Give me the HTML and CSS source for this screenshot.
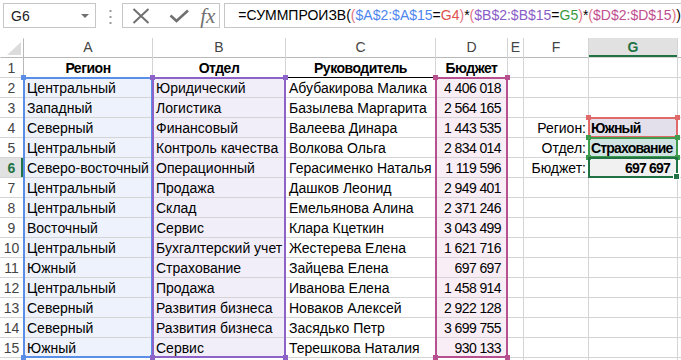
FILE: index.html
```html
<!DOCTYPE html>
<html lang="ru">
<head>
    <meta charset="UTF-8">
    <meta name="viewport" content="width=device-width, initial-scale=1.0">
    <title>СУММПРОИЗВ</title>
    <link rel="stylesheet" href="styles.css">
</head>
<body>
    <div class="topbar">
        <div class="namebox"><span>G6</span><i class="arrow"></i></div>
        <div class="grip">
            <svg width="3" height="15" viewBox="0 0 3 15"><rect x="0.5" y="0" width="2" height="2" fill="#9a9a9a"/><rect x="0.5" y="6" width="2" height="2" fill="#9a9a9a"/><rect x="0.5" y="12" width="2" height="2" fill="#9a9a9a"/></svg>
        </div>
        <div class="buttons">
            <svg class="ico-x" width="18" height="16" viewBox="0 0 18 16"><path d="M1.5 1 L16.5 15 M16.5 1 L1.5 15" stroke="#707070" stroke-width="2" fill="none"/></svg>
            <svg class="ico-ok" width="20" height="14" viewBox="0 0 20 14"><path d="M1.5 6.5 L7.5 12 L19 1.5" stroke="#707070" stroke-width="2.6" fill="none"/></svg>
            <span class="fx">fx</span>
        </div>
        <div class="formula">=СУММПРОИЗВ(<span class="p">(</span><span class="ca">$A$2:$A$15</span>=<span class="cg4">G4</span><span class="p">)</span>*<span class="p">(</span><span class="cb">$B$2:$B$15</span>=<span class="cg5">G5</span><span class="p">)</span>*<span class="p">(</span><span class="cd">$D$2:$D$15</span><span class="p">)</span>)</div>
    </div>

    <div class="sheet-wrap">
        <div class="sheet">
            <div class="corner"><svg width="14" height="13" viewBox="0 0 14 13"><polygon points="14,0 14,13 0,13" fill="#dcdcdc"/></svg></div>
            <div class="h">A</div><div class="h">B</div><div class="h">C</div><div class="h">D</div><div class="h">E</div><div class="h">F</div><div class="h sel">G</div><div class="h"></div>

            <div class="rh">1</div><div class="c th">Регион</div><div class="c th">Отдел</div><div class="c th">Руководитель</div><div class="c th">Бюджет</div><div class="c"></div><div class="c"></div><div class="c"></div><div class="c"></div>

            <div class="rh">2</div><div class="c fa">Центральный</div><div class="c fb">Юридический</div><div class="c">Абубакирова Малика</div><div class="c fd num">4 406 018</div><div class="c"></div><div class="c"></div><div class="c"></div><div class="c"></div>

            <div class="rh">3</div><div class="c fa">Западный</div><div class="c fb">Логистика</div><div class="c">Базылева Маргарита</div><div class="c fd num">2 564 165</div><div class="c"></div><div class="c"></div><div class="c"></div><div class="c"></div>

            <div class="rh">4</div><div class="c fa">Северный</div><div class="c fb">Финансовый</div><div class="c">Валеева Динара</div><div class="c fd num">1 443 535</div><div class="c"></div><div class="c lbl">Регион:</div><div class="c val v-reg">Южный</div><div class="c"></div>

            <div class="rh">5</div><div class="c fa">Центральный</div><div class="c fb">Контроль качества</div><div class="c">Волкова Ольга</div><div class="c fd num">2 834 014</div><div class="c"></div><div class="c lbl">Отдел:</div><div class="c val v-dep">Страхование</div><div class="c"></div>

            <div class="rh sel">6</div><div class="c fa">Северо-восточный</div><div class="c fb">Операционный</div><div class="c">Герасименко Наталья</div><div class="c fd num">1 119 596</div><div class="c"></div><div class="c lbl">Бюджет:</div><div class="c val v-sum num">697 697</div><div class="c"></div>

            <div class="rh">7</div><div class="c fa">Центральный</div><div class="c fb">Продажа</div><div class="c">Дашков Леонид</div><div class="c fd num">2 949 401</div><div class="c"></div><div class="c"></div><div class="c"></div><div class="c"></div>

            <div class="rh">8</div><div class="c fa">Центральный</div><div class="c fb">Склад</div><div class="c">Емельянова Алина</div><div class="c fd num">2 371 246</div><div class="c"></div><div class="c"></div><div class="c"></div><div class="c"></div>

            <div class="rh">9</div><div class="c fa">Восточный</div><div class="c fb">Сервис</div><div class="c">Клара Кцеткин</div><div class="c fd num">3 043 499</div><div class="c"></div><div class="c"></div><div class="c"></div><div class="c"></div>

            <div class="rh">10</div><div class="c fa">Центральный</div><div class="c fb">Бухгалтерский учет</div><div class="c">Жестерева Елена</div><div class="c fd num">1 621 716</div><div class="c"></div><div class="c"></div><div class="c"></div><div class="c"></div>

            <div class="rh">11</div><div class="c fa">Южный</div><div class="c fb">Страхование</div><div class="c">Зайцева Елена</div><div class="c fd num">697 697</div><div class="c"></div><div class="c"></div><div class="c"></div><div class="c"></div>

            <div class="rh">12</div><div class="c fa">Центральный</div><div class="c fb">Продажа</div><div class="c">Иванова Елена</div><div class="c fd num">1 458 914</div><div class="c"></div><div class="c"></div><div class="c"></div><div class="c"></div>

            <div class="rh">13</div><div class="c fa">Северный</div><div class="c fb">Развития бизнеса</div><div class="c">Новаков Алексей</div><div class="c fd num">2 922 128</div><div class="c"></div><div class="c"></div><div class="c"></div><div class="c"></div>

            <div class="rh">14</div><div class="c fa">Северный</div><div class="c fb">Развития бизнеса</div><div class="c">Засядько Петр</div><div class="c fd num">3 699 755</div><div class="c"></div><div class="c"></div><div class="c"></div><div class="c"></div>

            <div class="rh">15</div><div class="c fa">Южный</div><div class="c fb">Сервис</div><div class="c">Терешкова Наталия</div><div class="c fd num">930 133</div><div class="c"></div><div class="c"></div><div class="c"></div><div class="c"></div>

            <div class="rh"></div><div class="c"></div><div class="c"></div><div class="c"></div><div class="c"></div><div class="c"></div><div class="c"></div><div class="c"></div><div class="c"></div>
        </div>

        <!-- цветные рамки диапазонов из формулы, поверх листа -->
        <div class="marks">
            <div class="range r-a"><i class="hd tl"></i><i class="hd tr"></i><i class="hd bl"></i><i class="hd br"></i></div>
            <div class="range r-b"><i class="hd tl"></i><i class="hd tr"></i><i class="hd bl"></i><i class="hd br"></i></div>
            <div class="range r-d"><i class="hd tl"></i><i class="hd tr"></i><i class="hd bl"></i><i class="hd br"></i></div>
            <div class="range r-g4"><i class="hd tl"></i><i class="hd tr"></i></div>
            <div class="range r-g5"><i class="hd tl"></i><i class="hd tr"></i><i class="hd bl"></i><i class="hd br"></i></div>
            <div class="range active"><i class="fill"></i></div>
        </div>
    </div>
</body>
</html>
```

FILE: styles.css
```css
body {
    margin: 0;
    width: 681px;
    height: 360px;
    overflow: hidden;
    background-color: #fff;
    font-family: "Liberation Sans", Arial, sans-serif;
    font-size: 14px;
    color: #000;
}

/* строка формул */
.topbar {
    display: flex;
    align-items: flex-start;
    height: 38px;
    padding-top: 3px;
    box-sizing: border-box;
}
.namebox {
    margin-left: 3px;
    width: 103px;
    height: 25px;
    border: 1px solid #c6c6c6;
    box-sizing: border-box;
    display: flex;
    align-items: center;
    justify-content: space-between;
    padding: 0 6px 0 7px;
    color: #222;
}
.arrow {
    width: 0;
    height: 0;
    border-left: 4px solid transparent;
    border-right: 4px solid transparent;
    border-top: 4px solid #707070;
}
.grip {
    width: 29px;
    display: flex;
    justify-content: center;
    padding-top: 7px;
    padding-left: 2px;
    box-sizing: border-box;
}
.buttons {
    width: 109px;
    height: 25px;
    border: 1px solid #c6c6c6;
    box-sizing: border-box;
    display: flex;
    align-items: center;
    padding-left: 9px;
}
.ico-ok {
    margin-left: 19px;
}
.fx {
    margin-left: 11px;
    font-family: "Liberation Serif", serif;
    font-style: italic;
    font-size: 21px;
    color: #707070;
    line-height: 20px;
}
.formula {
    flex: 1;
    height: 25px;
    margin-left: 4px;
    border: 1px solid #c6c6c6;
    border-right: none;
    box-sizing: border-box;
    padding-left: 13px;
    line-height: 23px;
    white-space: nowrap;
}
.formula .p { color: #e07384; }
.formula .ca { color: #4e86ee; }
.formula .cg4 { color: #e0504f; }
.formula .cb { color: #8a5cc6; }
.formula .cg5 { color: #3a9a3e; }
.formula .cd { color: #bf4f90; }

/* лист */
.sheet-wrap {
    position: relative;
}
.sheet,
.marks {
    display: grid;
    grid-template-columns: 23px 128px 132px 149px 71px 15px 64px 88px 1fr;
    grid-auto-rows: 19px;
    gap: 1px;
}
.sheet {
    background-color: #d4d4d4;
}
.marks {
    position: absolute;
    top: 0;
    left: 0;
    right: 0;
    bottom: 0;
    pointer-events: none;
}
.corner {
    background-color: #fff;
    display: flex;
    justify-content: flex-end;
    align-items: flex-end;
    padding: 0 2px 2px 0;
    box-shadow: 1px 1px 0 #b8b8b8;
}
.h {
    background-color: #fff;
    color: #444;
    text-align: center;
    line-height: 19px;
    box-shadow: 0 1px 0 #b8b8b8;
}
.rh {
    background-color: #fff;
    color: #444;
    text-align: center;
    line-height: 20px;
    box-shadow: 1px 0 0 #b8b8b8;
}
.h.sel {
    background-color: #e1e1e1;
    color: #217346;
    font-weight: bold;
    box-shadow: inset 0 -2px 0 #217346;
}
.rh.sel {
    background-color: #e1e1e1;
    color: #217346;
    font-weight: bold;
    box-shadow: inset -2px 0 0 #217346;
}
.c {
    background-color: #fff;
    line-height: 20px;
    padding: 0 3px;
    white-space: nowrap;
    overflow: hidden;
}
.th {
    font-weight: bold;
    text-align: center;
    letter-spacing: -0.5px;
    box-shadow: 0 1px 0 #000;
}
.num {
    text-align: right;
    padding-right: 6px;
    letter-spacing: -0.6px;
}
.lbl {
    text-align: right;
    padding-right: 2px;
}
.fa { background-color: #eef2fc; }
.fb { background-color: #f2eef9; }
.fd { background-color: #f9eef5; }
.val {
    font-weight: bold;
    letter-spacing: -0.8px;
    padding-left: 2px;
}
.v-reg { background-color: #e3e0ec; }
.v-dep { background-color: #cfe4e3; }
.v-sum {
    background-color: #f1f1f1;
    padding-right: 7px;
}

/* рамки диапазонов */
.range {
    position: relative;
    margin: -1px;
    border: 2px solid;
}
.r-a { grid-column: 2; grid-row: 3 / 17; border-color: #5b8ee6; color: #5b8ee6; }
.r-b { grid-column: 3; grid-row: 3 / 17; border-color: #8e63c7; color: #8e63c7; }
.r-d { grid-column: 5; grid-row: 3 / 17; border-color: #b6508f; color: #b6508f; }
.r-g4 { grid-column: 8; grid-row: 5; border-color: #e06a6a; color: #e06a6a; }
.r-g5 { grid-column: 8; grid-row: 6; border-color: #3d9b4b; color: #3d9b4b; }
.active { grid-column: 8; grid-row: 7; border-color: #217346; }
.hd {
    position: absolute;
    width: 5px;
    height: 5px;
    background-color: currentColor;
}
.hd.tl { top: -4px; left: -4px; }
.hd.tr { top: -4px; right: -4px; }
.hd.bl { bottom: -4px; left: -4px; }
.hd.br { bottom: -4px; right: -4px; }
.fill {
    position: absolute;
    right: -4px;
    bottom: -4px;
    width: 5px;
    height: 5px;
    background-color: #217346;
    border: 1px solid #fff;
}
```
